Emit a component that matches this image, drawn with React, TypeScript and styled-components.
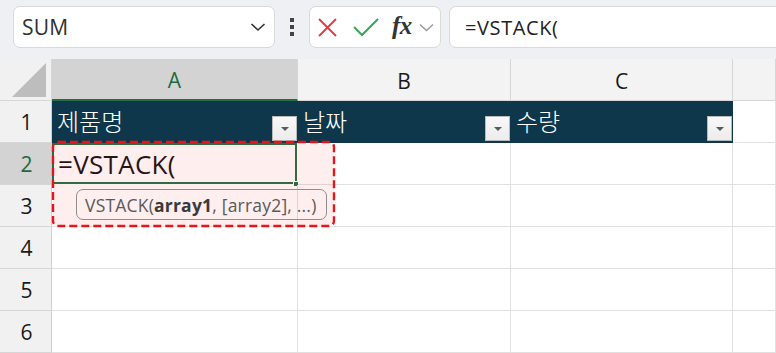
import React from 'react';
import styled, { createGlobalStyle } from 'styled-components';

const GlobalStyle = createGlobalStyle`
  html, body { margin: 0; padding: 0; background: #fff; overflow: hidden; }
  body { font-family: "Open Sans", "Noto Sans", "Noto Sans CJK KR", sans-serif; }
  * { box-sizing: border-box; }
`;

const Page = styled.div`
  position: relative;
  width: 776px;
  height: 353px;
  overflow: hidden;
  background: #fff;
`;

const Toolbar = styled.div`
  height: 59px;
  background: #eef0f3;
  display: flex;
  align-items: flex-start;
  padding: 6px 0 0 13px;
`;

const Box = styled.div<{ $w?: number }>`
  ${(p) => (p.$w ? `width: ${p.$w}px;` : 'flex: 1;')}
  height: 42px;
  background: #fff;
  border: 1px solid #d7d9dc;
  border-radius: 7px;
  display: flex;
  align-items: center;
`;

const NameText = styled.span`
  flex: 1;
  padding-left: 8px;
  font-size: 21px;
  color: #303030;
  letter-spacing: 0.2px;
`;

const Chevron = styled.svg`
  margin-right: 8px;
`;

const Grip = styled.div`
  width: 34px;
  height: 42px;
  display: flex;
  align-items: center;
  justify-content: center;
`;

const IconGroup = styled.div`
  display: flex;
  align-items: center;
  padding-left: 8px;
`;

const Fx = styled.span`
  font-family: "Liberation Serif", "DejaVu Serif", serif;
  font-style: italic;
  font-weight: 600;
  font-size: 25px;
  color: #333;
  margin-left: 13px;
  letter-spacing: -0.5px;
  line-height: 1;
  margin-top: -3px;
`;

const FormulaBox = styled(Box)`
  margin-left: 8px;
  margin-right: -12px;
`;

const FormulaText = styled.span`
  padding-left: 15px;
  font-size: 20px;
  letter-spacing: 0.6px;
  color: #222;
`;

const Grid = styled.div`
  display: grid;
  grid-template-columns: 52px 246px 213px 222px 1fr;
  grid-auto-rows: 42px;
`;

const Corner = styled.div`
  background: #f1f1f1;
  border-right: 1px solid #d6d6d6;
  border-bottom: 1px solid #d6d6d6;
  display: flex;
  align-items: flex-end;
  justify-content: flex-end;
  padding: 0 5px 3px 0;
`;

const ColHead = styled.div<{ $active?: boolean }>`
  background: ${(p) => (p.$active ? '#d3d3d3' : '#f3f3f3')};
  border-right: 1px solid #d6d6d6;
  border-bottom: ${(p) => (p.$active ? '2px solid #1f6f43' : '1px solid #d6d6d6')};
  display: flex;
  align-items: center;
  justify-content: center;
  font-size: 21px;
  color: ${(p) => (p.$active ? '#1d6a3e' : '#1a1a1a')};
  padding-top: 2px;
`;

const RowHead = styled.div<{ $active?: boolean }>`
  background: ${(p) => (p.$active ? '#d3d3d3' : '#f1f1f1')};
  border-right: 1px solid #cfcfcf;
  border-bottom: 1px solid #d6d6d6;
  display: flex;
  align-items: center;
  justify-content: center;
  font-size: 21px;
  color: ${(p) => (p.$active ? '#1d6a3e' : '#1a1a1a')};
  padding-left: 2px;
`;

const Cell = styled.div<{ $selected?: boolean }>`
  position: relative;
  border-right: 1px solid #e0e0e0;
  border-bottom: 1px solid #e0e0e0;
  display: flex;
  align-items: center;
  padding-left: 6px;
  font-size: 26px;
  letter-spacing: 0.3px;
  color: #111;
  ${(p) => (p.$selected ? 'box-shadow: inset 0 0 0 2px #1f6f43; border-color: transparent;' : '')}
`;

const HeaderCell = styled.div`
  position: relative;
  background: #0e374b;
  border-bottom: 1px solid #0e374b;
  display: flex;
  align-items: center;
  padding-left: 5px;
  padding-bottom: 2px;
  font-family: "Noto Sans CJK KR", "Noto Sans", sans-serif;
  font-size: 24px;
  font-weight: 300;
  color: #fff;
`;

const FilterButton = styled.div`
  position: absolute;
  right: 1px;
  bottom: 1px;
  width: 25px;
  height: 25px;
  background: linear-gradient(#f8f8f8, #ececec);
  border: 1px solid #b9b9b9;
  display: flex;
  align-items: center;
  justify-content: center;
  &::after {
    content: '';
    border-left: 4px solid transparent;
    border-right: 4px solid transparent;
    border-top: 4px solid #5a5a5a;
  }
`;

const FillHandle = styled.div`
  position: absolute;
  right: -2px;
  bottom: -3px;
  width: 6px;
  height: 6px;
  background: #1f6f43;
  border: 1px solid #fff;
`;

const Highlight = styled.svg`
  position: absolute;
  left: 51px;
  top: 140px;
  pointer-events: none;
`;

const Tooltip = styled.div`
  position: absolute;
  left: 76px;
  top: 189px;
  width: 251px;
  height: 31px;
  border: 1.5px solid #8e8e8e;
  border-radius: 7px;
  display: flex;
  align-items: center;
  padding-left: 8px;
  font-size: 17.5px;
  letter-spacing: 0.2px;
  color: #5a5a5a;
  white-space: nowrap;
  b { color: #3a3a3a; font-weight: 700; }
`;

const rows = [2, 3, 4, 5, 6];

export default function App() {
  return (
    <Page>
      <GlobalStyle />
      <Toolbar>
        <Box $w={262}>
          <NameText>SUM</NameText>
          <Chevron width="16" height="10" viewBox="0 0 16 10">
            <path d="M1.5 2 L8 8 L14.5 2" fill="none" stroke="#333" strokeWidth="1.6" />
          </Chevron>
        </Box>
        <Grip>
          <svg width="6" height="18" viewBox="0 0 6 18">
            <rect x="1" y="0" width="4" height="4" fill="#444" />
            <rect x="1" y="7" width="4" height="4" fill="#444" />
            <rect x="1" y="14" width="4" height="4" fill="#444" />
          </svg>
        </Grip>
        <Box $w={132}>
          <IconGroup>
            <svg width="19" height="19" viewBox="0 0 19 19">
              <path d="M1 1 L18 18 M18 1 L1 18" stroke="#e5393f" strokeWidth="1.8" fill="none" />
            </svg>
            <svg width="26" height="19" viewBox="0 0 26 19" style={{ marginLeft: 16 }}>
              <path d="M1 9 L9 17 L25 1" stroke="#3aa45a" strokeWidth="2" fill="none" />
            </svg>
            <Fx>fx</Fx>
            <svg width="15" height="9" viewBox="0 0 15 9" style={{ marginLeft: 7 }}>
              <path d="M1 1.5 L7.5 7.5 L14 1.5" fill="none" stroke="#9a9a9a" strokeWidth="1.4" />
            </svg>
          </IconGroup>
        </Box>
        <FormulaBox>
          <FormulaText>=VSTACK(</FormulaText>
        </FormulaBox>
      </Toolbar>
      <Grid>
        <Corner>
          <svg width="34" height="34" viewBox="0 0 34 34">
            <path d="M34 0 L34 34 L0 34 Z" fill="#bdbdbd" />
          </svg>
        </Corner>
        <ColHead $active>A</ColHead>
        <ColHead>B</ColHead>
        <ColHead>C</ColHead>
        <ColHead />

        <RowHead>1</RowHead>
        <HeaderCell>
          제품명
          <FilterButton />
        </HeaderCell>
        <HeaderCell>
          날짜
          <FilterButton />
        </HeaderCell>
        <HeaderCell>
          수량
          <FilterButton />
        </HeaderCell>
        <Cell />

        {rows.map((r) => (
          <React.Fragment key={r}>
            <RowHead $active={r === 2}>{r}</RowHead>
            {r === 2 ? (
              <Cell $selected>
                =VSTACK(
                <FillHandle />
              </Cell>
            ) : (
              <Cell />
            )}
            <Cell />
            <Cell />
            <Cell />
          </React.Fragment>
        ))}
      </Grid>
      <Highlight width="285" height="88" viewBox="0 0 285 88">
        <rect
          x="2"
          y="2"
          width="281"
          height="84"
          rx="5"
          fill="rgba(240,70,70,0.09)"
          stroke="#e8141c"
          strokeWidth="2.4"
          strokeDasharray="8 4"
        />
      </Highlight>
      <Tooltip>
        VSTACK(<b>array1</b>, [array2], ...)
      </Tooltip>
    </Page>
  );
}
